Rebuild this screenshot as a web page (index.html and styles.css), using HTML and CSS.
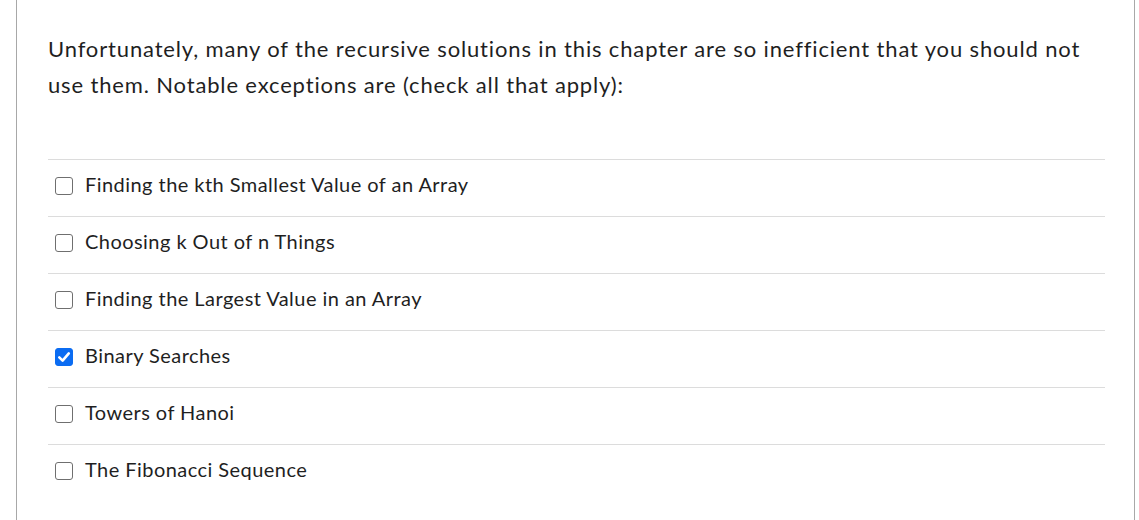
FILE: index.html
```html
<!DOCTYPE html>
<html>
<head>
<meta charset="utf-8">
<link rel="stylesheet" href="styles.css">
</head>
<body>
<div class="panel">
  <div class="question">Unfortunately, many of the recursive solutions in this chapter are so inefficient that you should not use them. Notable exceptions are (check all that apply):</div>
  <div class="answers">
    <div class="answer"><span class="box"></span><span class="label">Finding the kth Smallest Value of an Array</span></div>
    <div class="answer"><span class="box"></span><span class="label">Choosing k Out of n Things</span></div>
    <div class="answer"><span class="box"></span><span class="label">Finding the Largest Value in an Array</span></div>
    <div class="answer"><span class="box checked"><svg viewBox="0 0 18 18" width="18" height="18"><path d="M4.3 9.4 L7.6 12.6 L13.8 5.4" fill="none" stroke="#fff" stroke-width="2.6" stroke-linecap="round" stroke-linejoin="round"/></svg></span><span class="label">Binary Searches</span></div>
    <div class="answer"><span class="box"></span><span class="label">Towers of Hanoi</span></div>
    <div class="answer"><span class="box"></span><span class="label">The Fibonacci Sequence</span></div>
  </div>
</div>
</body>
</html>
```

FILE: styles.css
```css
html, body {
  margin: 0;
  padding: 0;
  background: #fff;
}
body {
  font-family: Lato, "Open Sans", sans-serif;
  color: #1f1f1f;
}
.panel {
  margin: 0 4px 0 16px;
  height: 520px;
  box-sizing: border-box;
  border-left: 1px solid #a8a8a8;
  border-right: 1px solid #a8a8a8;
  padding: 31px 29px 0 31px;
}
.question {
  font-size: 22px;
  line-height: 36px;
  letter-spacing: 0.85px;
}
.answers {
  margin-top: 56px;
}
.answer {
  display: flex;
  align-items: flex-start;
  border-top: 1px solid #dcdcdc;
  padding: 12px 0 20px 7px;
  height: 24px;
}
.box {
  width: 18px;
  height: 18px;
  box-sizing: border-box;
  border: 1.5px solid #6f6f6f;
  border-radius: 3px;
  margin-top: 5px;
  margin-right: 12px;
  flex: none;
  display: flex;
}
.box.checked {
  background: #0b6cf2;
  border-color: #0b6cf2;
}
.box.checked svg {
  margin: -1.5px;
}
.label {
  font-size: 20px;
  line-height: 24px;
  letter-spacing: 0.45px;
}
```
